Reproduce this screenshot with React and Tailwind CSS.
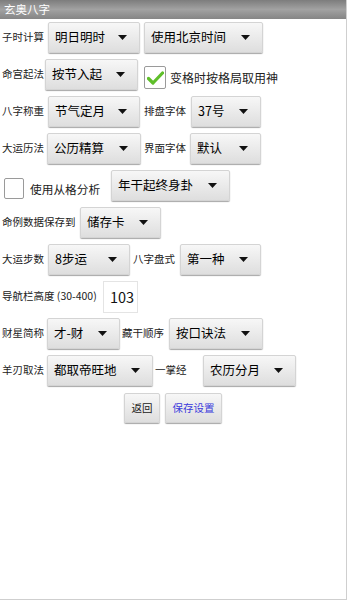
import React from "react";

const FONT = { fontFamily: '"Noto Sans CJK SC", "Noto Sans", sans-serif' };

function Spinner({ text, w }) {
  return (
    <div
      className={`${w} h-[31px] shrink-0 flex items-center justify-between pl-[6px] pr-[12px] rounded-[2px] bg-gradient-to-b from-[#f7f7f7] to-[#dedede] border border-[#d4d4d4] shadow-[0_1px_1px_rgba(0,0,0,0.35)] text-[12.5px] text-black`}
    >
      <span className="whitespace-nowrap leading-none">{text}</span>
      <svg width="9" height="5" viewBox="0 0 9 5" className="shrink-0">
        <polygon points="0,0 9,0 4.5,5" fill="#111" />
      </svg>
    </div>
  );
}

function Label({ text, w, cls = "" }) {
  return (
    <span className={`${w} shrink-0 whitespace-nowrap text-[10.5px] text-[#222] leading-none ${cls}`}>
      {text}
    </span>
  );
}

function CheckBox({ checked, size }) {
  return (
    <div className={`${size} shrink-0 bg-white border border-[#9a9a9a] rounded-[2px] flex items-center justify-center`}>
      {checked && (
        <svg width="17" height="14" viewBox="0 0 17 14">
          <path d="M1.5 7.5 L6 12 L15.5 2" fill="none" stroke="#5fbf2a" strokeWidth="3.2" strokeLinecap="round" strokeLinejoin="round" />
        </svg>
      )}
    </div>
  );
}

function Button({ text, w, blue }) {
  return (
    <div
      className={`${w} h-[30px] flex items-center justify-center rounded-[2px] bg-gradient-to-b from-[#f7f7f7] to-[#dedede] border border-[#d4d4d4] shadow-[0_1px_1px_rgba(0,0,0,0.35)] text-[10.5px] ${blue ? "text-[#3b3bdc]" : "text-[#222]"}`}
    >
      {text}
    </div>
  );
}

export default function App() {
  return (
    <div className="w-[347px] h-[600px] bg-white relative overflow-hidden border-r border-b border-[#cfcfcf]" style={FONT}>
      <div className="h-[19px] bg-gradient-to-b from-[#7d7d7d] via-[#a2a2a2] to-[#858585] flex items-center pl-[4px] text-white text-[11.5px] leading-none">
        玄奥八字
      </div>
      <div className="flex flex-col gap-[6px] pt-[3px] pl-[2px]">
        <div className="flex items-center h-[31px]">
          <Label text="子时计算" w="w-[46px]" />
          <Spinner text="明日明时" w="w-[92px]" />
          <div className="w-[4px]" />
          <Spinner text="使用北京时间" w="w-[119px]" />
        </div>
        <div className="flex items-center h-[31px]">
          <Label text="命宫起法" w="w-[43px]" />
          <Spinner text="按节入起" w="w-[93px]" />
          <div className="w-[6px]" />
          <CheckBox checked size="w-[22px] h-[23px] mt-[6px]" />
          <span className="ml-[4px] mt-[6px] text-[12px] text-[#222] whitespace-nowrap leading-none">变格时按格局取用神</span>
        </div>
        <div className="flex items-center h-[31px]">
          <Label text="八字称重" w="w-[46px]" />
          <Spinner text="节气定月" w="w-[92px]" />
          <Label text="排盘字体" w="w-[47px]" cls="ml-[4px]" />
          <Spinner text="37号" w="w-[70px]" />
        </div>
        <div className="flex items-center h-[31px]">
          <Label text="大运历法" w="w-[45px]" />
          <Spinner text="公历精算" w="w-[94px]" />
          <Label text="界面字体" w="w-[46px]" cls="ml-[3px]" />
          <Spinner text="默认" w="w-[71px]" />
        </div>
        <div className="flex items-center h-[31px]">
          <div className="ml-[2px] mt-[6px]">
            <CheckBox size="w-[20px] h-[21px]" />
          </div>
          <span className="ml-[6px] w-[81px] mt-[6px] text-[11.7px] text-[#222] whitespace-nowrap leading-none">使用从格分析</span>
          <Spinner text="年干起终身卦" w="w-[119px]" />
        </div>
        <div className="flex items-center h-[31px]">
          <Label text="命例数据保存到" w="w-[78px]" />
          <Spinner text="储存卡" w="w-[81px]" />
        </div>
        <div className="flex items-center h-[31px]">
          <Label text="大运步数" w="w-[46px]" />
          <Spinner text="8步运" w="w-[82px]" />
          <Label text="八字盘式" w="w-[47px]" cls="ml-[3px]" />
          <Spinner text="第一种" w="w-[81px]" />
        </div>
        <div className="flex items-center h-[31px]">
          <Label text="导航栏高度 (30-400)" w="w-[101px]" />
          <div className="w-[35px] h-[32px] bg-white border border-[#e4e4e4] flex items-center pl-[6px] text-[14.5px] text-[#111]">
            103
          </div>
        </div>
        <div className="flex items-center h-[31px]">
          <Label text="财星简称" w="w-[45px]" />
          <Spinner text="才-财" w="w-[73px]" />
          <Label text="藏干顺序" w="w-[47px]" cls="ml-[2px]" />
          <Spinner text="按口诀法" w="w-[94px]" />
        </div>
        <div className="flex items-center h-[31px]">
          <Label text="羊刃取法" w="w-[45px]" />
          <Spinner text="都取帝旺地" w="w-[106px]" />
          <Label text="一掌经" w="w-[48px]" cls="ml-[2px]" />
          <Spinner text="农历分月" w="w-[93px]" />
        </div>
        <div className="flex items-center justify-center gap-[5px] h-[31px] pr-[2px]">
          <Button text="返回" w="w-[36px]" />
          <Button text="保存设置" w="w-[57px]" blue />
        </div>
      </div>
    </div>
  );
}
